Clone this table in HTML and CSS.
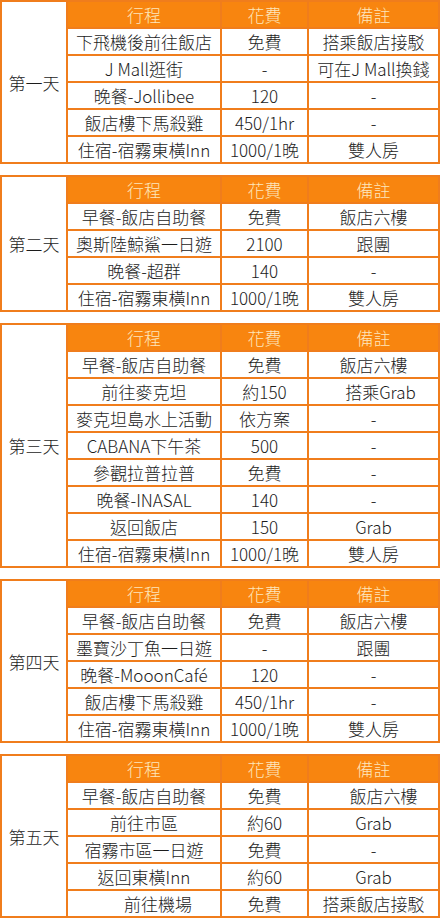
FILE: index.html
```html
<!DOCTYPE html>
<html lang="zh-Hant">
<head>
<meta charset="utf-8">
<title>行程表</title>
<link rel="stylesheet" href="styles.css">
</head>
<body>
<main class="plan">
  <section class="day rows6">
    <div class="label">第一天</div>
    <div class="th">行程</div><div class="th">花費</div><div class="th">備註</div>
    <div class="td">下飛機後前往飯店</div><div class="td">免費</div><div class="td">搭乘飯店接駁</div>
    <div class="td">J Mall逛街</div><div class="td">-</div><div class="td">可在J Mall換錢</div>
    <div class="td">晚餐-Jollibee</div><div class="td">120</div><div class="td">-</div>
    <div class="td">飯店樓下馬殺雞</div><div class="td">450/1hr</div><div class="td">-</div>
    <div class="td">住宿-宿霧東橫Inn</div><div class="td">1000/1晚</div><div class="td">雙人房</div>
  </section>

  <section class="day rows5">
    <div class="label">第二天</div>
    <div class="th">行程</div><div class="th">花費</div><div class="th">備註</div>
    <div class="td">早餐-飯店自助餐</div><div class="td">免費</div><div class="td">飯店六樓</div>
    <div class="td">奧斯陸鯨鯊一日遊</div><div class="td">2100</div><div class="td">跟團</div>
    <div class="td">晚餐-超群</div><div class="td">140</div><div class="td">-</div>
    <div class="td">住宿-宿霧東橫Inn</div><div class="td">1000/1晚</div><div class="td">雙人房</div>
  </section>

  <section class="day rows9">
    <div class="label">第三天</div>
    <div class="th">行程</div><div class="th">花費</div><div class="th">備註</div>
    <div class="td">早餐-飯店自助餐</div><div class="td">免費</div><div class="td">飯店六樓</div>
    <div class="td">前往麥克坦</div><div class="td">約150</div><div class="td shift-s">搭乘Grab</div>
    <div class="td">麥克坦島水上活動</div><div class="td">依方案</div><div class="td">-</div>
    <div class="td">CABANA下午茶</div><div class="td">500</div><div class="td">-</div>
    <div class="td">參觀拉普拉普</div><div class="td">免費</div><div class="td">-</div>
    <div class="td">晚餐-INASAL</div><div class="td">140</div><div class="td">-</div>
    <div class="td">返回飯店</div><div class="td">150</div><div class="td">Grab</div>
    <div class="td">住宿-宿霧東橫Inn</div><div class="td">1000/1晚</div><div class="td">雙人房</div>
  </section>

  <section class="day rows6">
    <div class="label">第四天</div>
    <div class="th">行程</div><div class="th">花費</div><div class="th">備註</div>
    <div class="td">早餐-飯店自助餐</div><div class="td">免費</div><div class="td">飯店六樓</div>
    <div class="td">墨寶沙丁魚一日遊</div><div class="td">-</div><div class="td">跟團</div>
    <div class="td">晚餐-MooonCafé</div><div class="td">120</div><div class="td">-</div>
    <div class="td">飯店樓下馬殺雞</div><div class="td">450/1hr</div><div class="td">-</div>
    <div class="td">住宿-宿霧東橫Inn</div><div class="td">1000/1晚</div><div class="td">雙人房</div>
  </section>

  <section class="day rows6">
    <div class="label">第五天</div>
    <div class="th">行程</div><div class="th">花費</div><div class="th">備註</div>
    <div class="td">早餐-飯店自助餐</div><div class="td">免費</div><div class="td shift-m">飯店六樓</div>
    <div class="td">前往市區</div><div class="td">約60</div><div class="td">Grab</div>
    <div class="td">宿霧市區一日遊</div><div class="td">免費</div><div class="td">-</div>
    <div class="td">返回東橫Inn</div><div class="td">約60</div><div class="td">Grab</div>
    <div class="td shift-l">前往機場</div><div class="td">免費</div><div class="td">搭乘飯店接駁</div>
  </section>
</main>
</body>
</html>
```
FILE: styles.css
```css
html, body {
  margin: 0;
  padding: 0;
  background: #ffffff;
}

body {
  font-family: "Noto Sans CJK TC", "Noto Sans", sans-serif;
  font-size: 17px;
  font-weight: 300;
  color: #1c1c1c;
  width: 440px;
  overflow: hidden;
}

.plan {
  display: flex;
  flex-direction: column;
  gap: 11px;
}

.day {
  display: grid;
  grid-template-columns: 64px 152px 85px 129px;
  gap: 2px;
  padding: 2px;
  background: #f07d1c;
}

.rows5 { grid-template-rows: repeat(5, 25px); }
.rows6 { grid-template-rows: repeat(6, 25px); }
.rows9 { grid-template-rows: repeat(9, 25px); }

.label,
.th,
.td {
  display: flex;
  align-items: center;
  justify-content: center;
  white-space: nowrap;
  line-height: 1;
  overflow: hidden;
}

.label {
  grid-row: 1 / -1;
  background: #ffffff;
}

.th {
  background: #f8850f;
  color: #fde7bd;
}

.td {
  background: #ffffff;
}

.shift-s { padding-left: 14px; }
.shift-m { padding-left: 20px; }
.shift-l { padding-left: 28px; }
```
